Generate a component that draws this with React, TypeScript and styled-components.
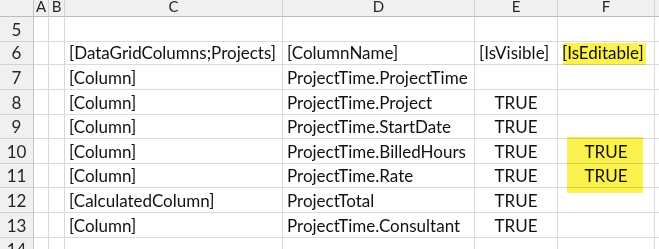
import React from "react";
import styled, { createGlobalStyle } from "styled-components";

const GlobalStyle = createGlobalStyle`
  html, body {
    margin: 0;
    padding: 0;
    background: #ffffff;
  }
  body {
    font-family: "Lato", "Liberation Sans", sans-serif;
    overflow: hidden;
  }
`;

const columns = [
  { key: "A", width: 15 },
  { key: "B", width: 16 },
  { key: "C", width: 218 },
  { key: "D", width: 192 },
  { key: "E", width: 83 },
  { key: "F", width: 97 },
  { key: "G", width: 40 },
];

type Align = "left" | "center";

interface Row {
  num: number;
  height: number;
  cells: { [key: string]: { text: string; align?: Align } };
}

const rows: Row[] = [
  { num: 5, height: 25, cells: {} },
  {
    num: 6,
    height: 23,
    cells: {
      C: { text: "[DataGridColumns;Projects]" },
      D: { text: "[ColumnName]" },
      E: { text: "[IsVisible]" },
      F: { text: "[IsEditable]" },
    },
  },
  {
    num: 7,
    height: 25,
    cells: {
      C: { text: "[Column]" },
      D: { text: "ProjectTime.ProjectTime" },
    },
  },
  {
    num: 8,
    height: 25,
    cells: {
      C: { text: "[Column]" },
      D: { text: "ProjectTime.Project" },
      E: { text: "TRUE", align: "center" },
    },
  },
  {
    num: 9,
    height: 24,
    cells: {
      C: { text: "[Column]" },
      D: { text: "ProjectTime.StartDate" },
      E: { text: "TRUE", align: "center" },
    },
  },
  {
    num: 10,
    height: 25,
    cells: {
      C: { text: "[Column]" },
      D: { text: "ProjectTime.BilledHours" },
      E: { text: "TRUE", align: "center" },
      F: { text: "TRUE", align: "center" },
    },
  },
  {
    num: 11,
    height: 24,
    cells: {
      C: { text: "[Column]" },
      D: { text: "ProjectTime.Rate" },
      E: { text: "TRUE", align: "center" },
      F: { text: "TRUE", align: "center" },
    },
  },
  {
    num: 12,
    height: 25,
    cells: {
      C: { text: "[CalculatedColumn]" },
      D: { text: "ProjectTotal" },
      E: { text: "TRUE", align: "center" },
    },
  },
  {
    num: 13,
    height: 25,
    cells: {
      C: { text: "[Column]" },
      D: { text: "ProjectTime.Consultant" },
      E: { text: "TRUE", align: "center" },
    },
  },
  { num: 14, height: 24, cells: {} },
];

// yellow marker strokes laid over the sheet
const highlights = [
  { left: 563, top: 43, width: 83, height: 22 },
  { left: 567, top: 137, width: 76, height: 56 },
];

const App: React.FC = () => {
  const template = `34px ${columns.map((c) => `${c.width}px`).join(" ")}`;
  return (
    <>
      <GlobalStyle />
      <Sheet>
        <Grid style={{ gridTemplateColumns: template }}>
          <Corner />
          {columns.map((c) => (
            <ColHeader key={c.key}>
              <span>{c.key}</span>
            </ColHeader>
          ))}
          {rows.map((r) => (
            <React.Fragment key={r.num}>
              <RowHeader $height={r.height}>
                <span>{r.num}</span>
              </RowHeader>
              {columns.map((c) => {
                const cell = r.cells[c.key];
                return (
                  <Cell key={c.key} $height={r.height} $align={cell?.align || "left"}>
                    {cell && <span>{cell.text}</span>}
                  </Cell>
                );
              })}
            </React.Fragment>
          ))}
        </Grid>
        {highlights.map((h, i) => (
          <Highlight
            key={i}
            style={{ left: h.left, top: h.top, width: h.width, height: h.height }}
          />
        ))}
      </Sheet>
    </>
  );
};

export default App;

const Sheet = styled.div`
  position: relative;
  width: 659px;
  height: 249px;
  overflow: hidden;
  background: #ffffff;
`;

const Grid = styled.div`
  display: grid;
  grid-auto-rows: auto;
  font-size: 17px;
  color: #111111;
`;

const Corner = styled.div`
  height: 17px;
  box-sizing: border-box;
  background: #f0f0f0;
  border-right: 1px solid #c4c4c4;
  border-bottom: 1px solid #bdbdbd;
`;

const ColHeader = styled.div`
  height: 17px;
  box-sizing: border-box;
  background: #f0f0f0;
  border-right: 1px solid #d2d2d2;
  border-bottom: 1px solid #bdbdbd;
  display: flex;
  justify-content: center;
  align-items: flex-start;
  color: #262626;
  font-size: 15px;

  > span {
    line-height: 12px;
  }
`;

const RowHeader = styled.div<{ $height: number }>`
  height: ${(p) => p.$height}px;
  box-sizing: border-box;
  background: #f0f0f0;
  border-right: 1px solid #c4c4c4;
  border-bottom: 1px solid #d2d2d2;
  display: flex;
  align-items: flex-end;
  justify-content: center;
  padding-bottom: 1px;
  color: #262626;

  > span {
    line-height: 20px;
  }
`;

const Cell = styled.div<{ $height: number; $align: Align }>`
  height: ${(p) => p.$height}px;
  box-sizing: border-box;
  border-right: 1px solid #dadada;
  border-bottom: 1px solid #dadada;
  display: flex;
  align-items: flex-end;
  justify-content: ${(p) => (p.$align === "center" ? "center" : "flex-start")};
  padding: 0 4px 1px 4px;
  white-space: nowrap;

  > span {
    line-height: 20px;
  }
`;

const Highlight = styled.div`
  position: absolute;
  background: #fbf24f;
  mix-blend-mode: multiply;
  pointer-events: none;
`;
